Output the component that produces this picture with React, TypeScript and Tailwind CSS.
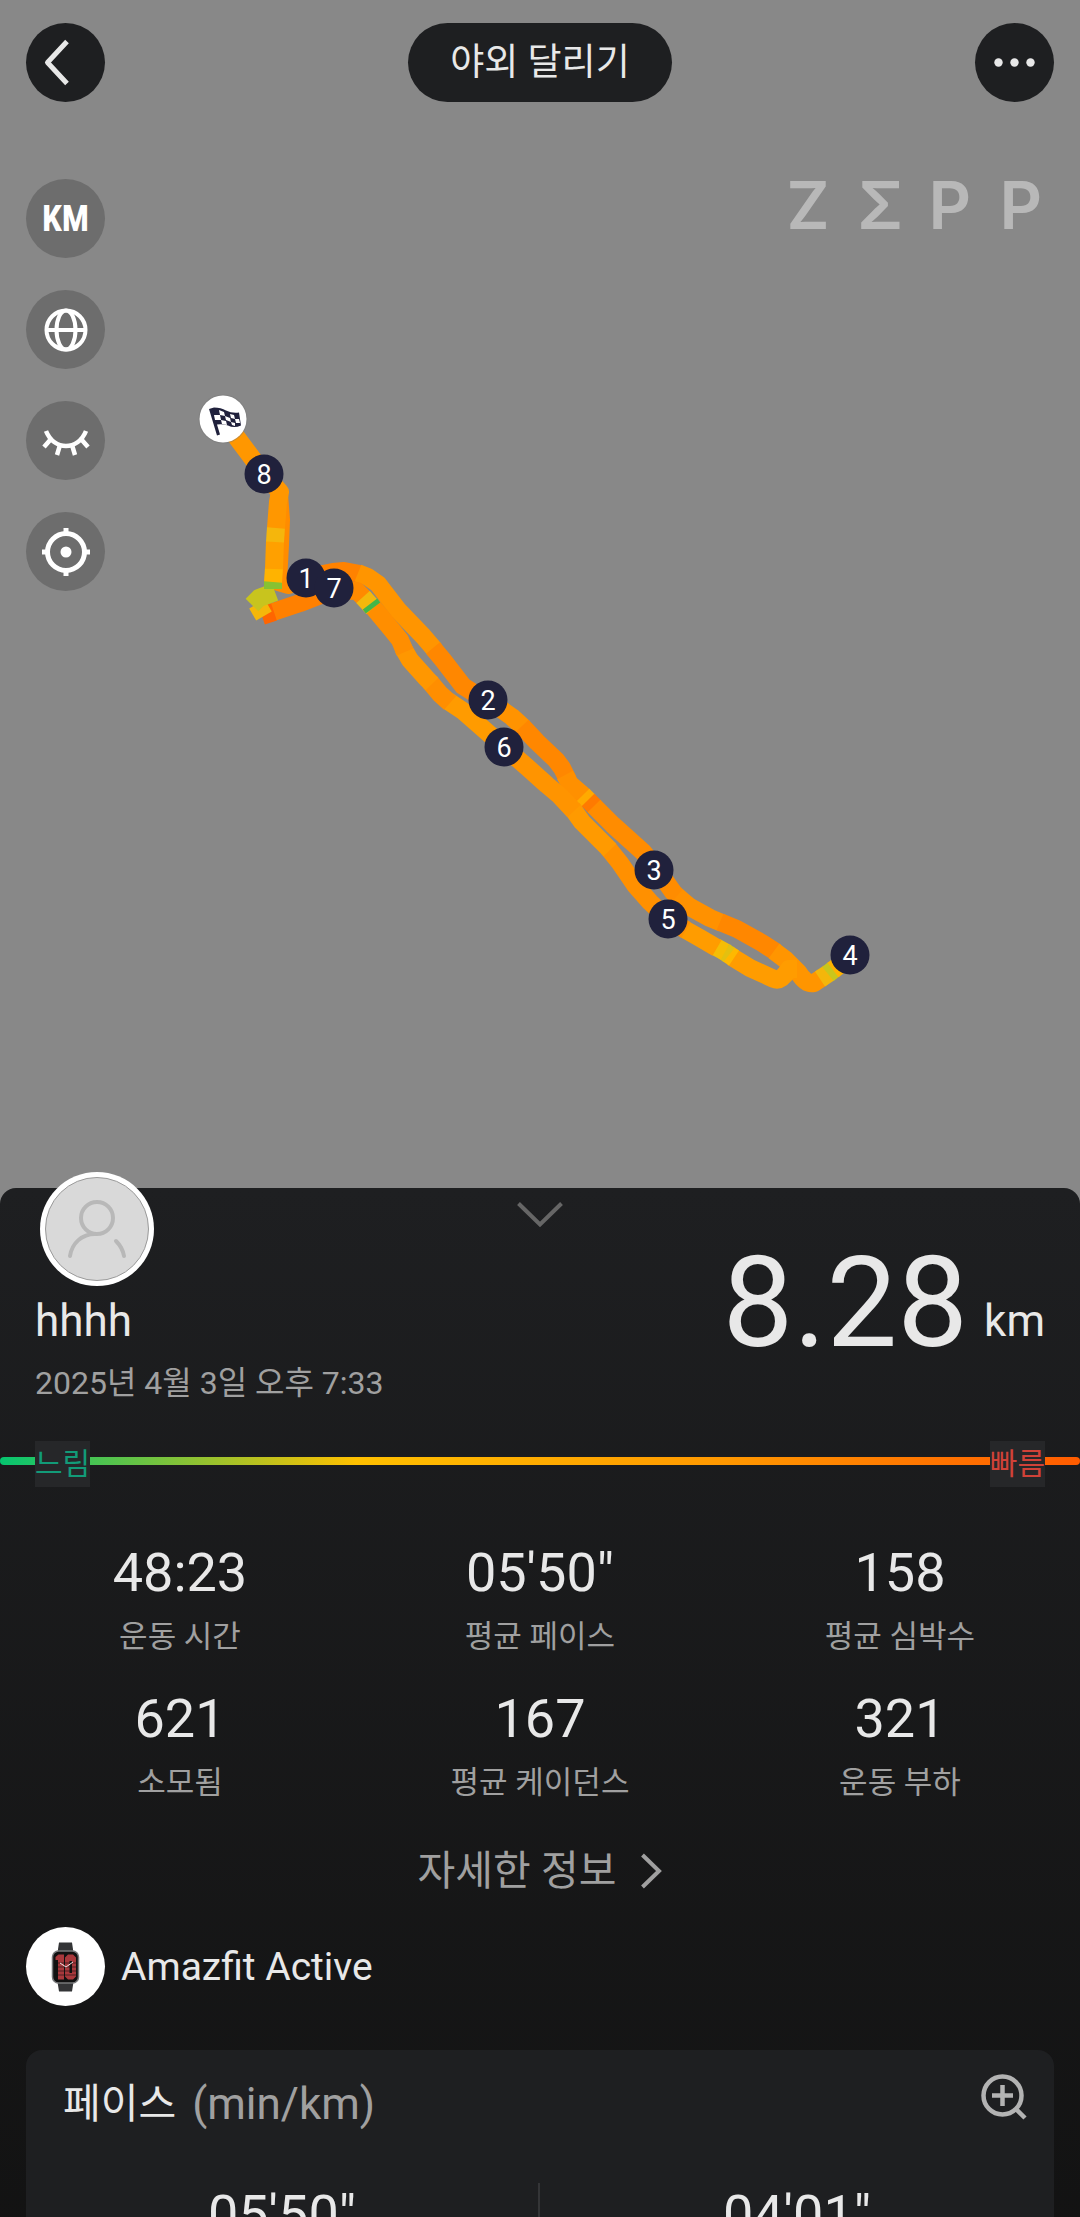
import type { ReactNode } from "react";

const stats = [
  { value: "48:23", label: "운동 시간" },
  { value: "05'50\"", label: "평균 페이스" },
  { value: "158", label: "평균 심박수" },
  { value: "621", label: "소모됨" },
  { value: "167", label: "평균 케이던스" },
  { value: "321", label: "운동 부하" },
];

// drawn in order, later segments cover earlier ones
const segments = [
  // outbound
  { d: "M279 494 L281 520 L280 545 L278 582 L288 585 L306 578 L322 573", color: "#ff8c00" },
  { d: "M318 575 L333 572 L344 571 L360 574", color: "#ff8200" },
  { d: "M358 573 L368 577 L378 584 L398 610 L423 636 L435 650", color: "#ff9500" },
  { d: "M433 648 L443 660 L463 686 L488 702", color: "#ff8700" },
  { d: "M488 700 L512 717 L524 728", color: "#ff9300" },
  { d: "M522 726 L537 742 L556 760 L562 768 L568 780", color: "#ff8700" },
  { d: "M565 775 L570 784 L584 796", color: "#ff9000" },
  { d: "M583 795 L589 801", color: "#ffaa00" },
  { d: "M588 800 L595 807", color: "#ff7a00" },
  { d: "M594 806 L613 825 L643 852 L656 868 L673 892 L679 898", color: "#ff8c00" },
  { d: "M677 896 L690 907 L710 918 L722 923", color: "#ff9100" },
  { d: "M720 922 L737 929 L762 943 L776 952", color: "#ff8700" },
  { d: "M774 951 L786 960 L798 972 Q806 985 814 983 L823 977", color: "#ff9500" },
  { d: "M820 979 L829 973", color: "#f4b60a" },
  { d: "M828 974 L834 969", color: "#c9c61c" },
  { d: "M833 970 L850 957", color: "#ffb300" },
  // return
  { d: "M797 969 L789 969 Q781 982 774 979 L750 968 L732 957", color: "#ff9c00" },
  { d: "M734 958 L728 954", color: "#ffb800" },
  { d: "M729 955 L724 951", color: "#e3c010" },
  { d: "M725 952 L716 947", color: "#f5bd05" },
  { d: "M717 948 L700 938 L684 929", color: "#ff9c00" },
  { d: "M686 930 L668 919 L650 902 L635 885 L620 863 L608 848", color: "#ff9000" },
  { d: "M610 850 L600 840 L582 822 L572 808", color: "#ff9a00" },
  { d: "M574 811 L560 796 L547 785 L527 767 L504 747", color: "#ff9400" },
  { d: "M504 747 L487 732 L463 711 L448 701", color: "#ff9b00" },
  { d: "M450 703 L440 694 L430 682", color: "#ff8e00" },
  { d: "M432 684 L427 679 L410 660 L403 648", color: "#ff9700" },
  { d: "M405 652 L400 640 L392 630 L373 607", color: "#ff8e00" },
  { d: "M366 600 L357 591 L334 590", color: "#ff8a00" },
  { d: "M373 608 L363 597", color: "#f3b80c" },
  { d: "M373 608 L370 604", color: "#43b649" },
  { d: "M336 589 L300 603 L270 613", color: "#ff8000" },
  { d: "M274 612 L262 616", color: "#ff6500" },
  { d: "M264 616 L257 604", color: "#f5b70a" },
  { d: "M252 605 L259 598 L275 592", color: "#c8c41e" },
  { d: "M273 589 L273 581", color: "#86c232" },
  { d: "M273 582 L274 568", color: "#ffb300" },
  { d: "M274 569 L275 541", color: "#ffa000" },
  { d: "M275 542 L276 527", color: "#f5b60c" },
  { d: "M276 528 L278 502 L280 492 L264 474 L223 419", color: "#ff9700" },
];

const kilometers = [
  { n: 8, x: 264, y: 474 },
  { n: 1, x: 306, y: 578 },
  { n: 7, x: 334, y: 588 },
  { n: 2, x: 488, y: 700 },
  { n: 6, x: 504, y: 747 },
  { n: 3, x: 654, y: 870 },
  { n: 5, x: 668, y: 919 },
  { n: 4, x: 850, y: 955 },
];

function RouteMap() {
  return (
    <svg viewBox="0 0 1080 1188" className="col-start-1 row-start-1 w-full" aria-label="route">
      <g fill="none" strokeWidth="18" strokeLinejoin="round">
        {segments.map((s) => (
          <path key={s.d} d={s.d} stroke={s.color} />
        ))}
      </g>
      <circle cx="223" cy="419" r="24.5" fill="#777" opacity="0.4" />
      <circle cx="223" cy="419" r="23.5" fill="#fff" />
      <g fill="#20213c">
        <path d="M209 409 l5 -1.500 q7 0 12 3 q6 3 13 2 l2 13 q-7 3 -13 0 q-6 -2 -11 -1 l3 10 -3 1z" />
        <g fill="#fff">
          <path d="M219 410 l5 2 1 4 -5 -1z" />
          <path d="M230 414 l4 1 1 4 -4 -1z" />
          <path d="M214 415 l6 0 1 5 -6 0z" />
          <path d="M225 416 l5 2 1 4 -5 -2z" />
          <path d="M235 419 l4 0 1 4 -4 0z" />
          <path d="M221 420 l5 1 1 4 -5 -1z" />
          <path d="M231 422 l4 1 0 3 -3 -1z" />
        </g>
      </g>
      {kilometers.map((k) => (
        <g key={k.n}>
          <circle cx={k.x} cy={k.y} r="19.500" fill="#20213c" />
          <text
            x={k.x}
            y={k.y + 10}
            textAnchor="middle"
            className="fill-white font-['Roboto',sans-serif] text-[27px]"
          >
            {k.n}
          </text>
        </g>
      ))}
    </svg>
  );
}

function MapButton({ label, children }: { label: string; children: ReactNode }) {
  return (
    <button
      aria-label={label}
      className="flex size-[79px] items-center justify-center rounded-full bg-[#6d6d6d] text-white"
    >
      {children}
    </button>
  );
}

function MapControls() {
  return (
    <div className="flex flex-col gap-8">
      <MapButton label="KM">
        <span className="font-['Roboto_Condensed','Liberation_Sans_Narrow','Roboto',sans-serif] text-[36px] leading-10 font-bold">
          KM
        </span>
      </MapButton>
      <MapButton label="지도 유형">
        <svg viewBox="0 0 44 44" className="size-11" fill="none" stroke="currentColor" strokeWidth="4">
          <circle cx="22" cy="22" r="19.500" />
          <ellipse cx="22" cy="22" rx="9.500" ry="19.500" />
          <path d="M3 22h38" />
        </svg>
      </MapButton>
      <MapButton label="지도 숨기기">
        <svg viewBox="0 0 48 48" className="size-12" fill="none" stroke="currentColor" strokeWidth="4.500">
          <path d="M4 14C12 34 36 34 44 14" />
          <path d="M9 22l-7 8M39 22l7 8M18 28l-3 10M30 28l3 10" />
        </svg>
      </MapButton>
      <MapButton label="위치">
        <svg viewBox="0 0 48 48" className="size-12" fill="none" stroke="currentColor" strokeWidth="5">
          <circle cx="24" cy="24" r="18.500" />
          <circle cx="24" cy="24" r="5.500" fill="currentColor" stroke="none" />
          <path d="M24 0v6M24 42v6M0 24h6M42 24h6" />
        </svg>
      </MapButton>
    </div>
  );
}

function Logo() {
  return (
    <div className="grid grid-cols-[71px_71px_71px_auto] font-['Inter',sans-serif] text-[66px] leading-[52px] font-semibold text-[#b8b8b8]">
      <span>Z</span>
      <span>Σ</span>
      <span>P</span>
      <span>P</span>
    </div>
  );
}

function TopBar() {
  return (
    <header className="flex items-center justify-between">
      <button aria-label="뒤로" className="size-[79px] rounded-full bg-[#1e1f21] text-[#e8e8e8]">
        <svg viewBox="0 0 79 79" fill="none" stroke="currentColor" strokeWidth="5" strokeLinejoin="round">
          <path d="M41 18.500L21.500 39.500 41 60.500" />
        </svg>
      </button>
      <h1 className="rounded-full bg-[#1e1f21] px-[42px] text-[37px] leading-[79px] text-[#e8e8e8]">
        야외 달리기
      </h1>
      <button aria-label="더보기" className="size-[79px] rounded-full bg-[#1e1f21] text-[#e8e8e8]">
        <svg viewBox="0 0 79 79" fill="currentColor">
          <circle cx="23.500" cy="39.500" r="4.200" />
          <circle cx="39.500" cy="39.500" r="4.200" />
          <circle cx="55.500" cy="39.500" r="4.200" />
        </svg>
      </button>
    </header>
  );
}

function Avatar() {
  return (
    <div className="absolute -top-4 left-10 size-[114px] rounded-full bg-white p-[5px]">
      <svg viewBox="0 0 104 104" fill="none">
        <circle cx="52" cy="52" r="51.500" fill="#d9d9d9" stroke="#9a9a9a" />
        <g stroke="#b8b8b8" strokeWidth="4" strokeLinecap="round">
          <circle cx="52" cy="41" r="16" />
          <path d="M25 79C27 66 37 57 50 57M71 64C75 68 78 73 79 79" />
        </g>
      </svg>
    </div>
  );
}

function WatchIcon() {
  return (
    <svg viewBox="0 0 79 79" className="size-[79px] shrink-0 rounded-full bg-white" fill="none">
      <path d="M33 15.500h13l1.500 10h-16zM31.500 55h16l-1.500 9.500h-13z" fill="#333436" />
      <rect x="26.500" y="24" width="26" height="32" rx="6" fill="#111" stroke="#77787a" strokeWidth="1.500" />
      <path d="M29.500 30l3-2.500h5.500v25h-6V33h-2.500z" fill="#a8383c" />
      <path d="M39 30.500l3-3h5l3 3v19l-3 3h-5l-3-3zM43.500 34v12h2.500V34z" fill="#a8383c" fillRule="evenodd" />
      <path d="M29 36h21M29 40h21M29 44h21M29 48h21" stroke="#111" strokeWidth="0.600" />
      <path d="M34 36l6 4 7-5" stroke="#f0e6e6" />
    </svg>
  );
}

function Summary() {
  return (
    <>
      <div className="flex justify-between px-[35px] pt-[52px]">
        <div className="pt-[55px]">
          <p className="text-[44px] leading-[52px] text-[#e8e8e8]">hhhh</p>
          <p className="mt-4 text-[32px] leading-10 text-[#a0a0a0]">2025년 4월 3일 오후 7:33</p>
        </div>
        <p className="flex items-start gap-4 text-[#e8e8e8]">
          <span className="text-[126px] leading-[126px]">8.28</span>
          <span className="pt-[55px] text-[44px] leading-[52px]">km</span>
        </p>
      </div>
      <div className="relative mt-[38px] flex justify-between px-[35px] text-[30px] leading-[46px]">
        <div className="absolute inset-x-0 top-4 h-2 rounded-full bg-[linear-gradient(90deg,#06c570_0%,#ffc000_33%,#ff9800_67%,#ff5c00_100%)]" />
        <span className="relative bg-[#262729] text-[#129b78]">느림</span>
        <span className="relative bg-[#262729] text-[#d04238]">빠름</span>
      </div>
    </>
  );
}

function PaceCard() {
  return (
    <section className="mx-[26px] mt-11 rounded-2xl bg-[#1e1f21]">
      <div className="flex items-start justify-between pt-6 pr-[27px] pl-[37px]">
        <h2 className="flex gap-4 pt-1 leading-[52px]">
          <span className="text-[41px] text-[#e8e8e8]">페이스</span>
          <span className="text-[44px] text-[#a0a0a0]">(min/km)</span>
        </h2>
        <button aria-label="확대" className="text-[#b3b3b3]">
          <svg viewBox="0 0 46 46" className="size-[46px]" fill="none" stroke="currentColor" strokeWidth="4.500">
            <circle cx="21.500" cy="21.500" r="19" />
            <path d="M11 21.500h21M21.500 11v21M35 35l9 9" />
          </svg>
        </button>
      </div>
      <div className="mt-[53px] grid grid-cols-2 divide-x-2 divide-[#343537] pb-10 text-center text-[54px] leading-[64px] text-[#e8e8e8]">
        <p>05'50"</p>
        <p>04'01"</p>
      </div>
    </section>
  );
}

export default function App() {
  return (
    <div className="h-screen overflow-hidden bg-[#888] font-['Roboto','Noto_Sans_CJK_KR',sans-serif]">
      <section className="grid">
        <RouteMap />
        <div className="relative col-start-1 row-start-1 px-[26px] pt-[23px]">
          <TopBar />
          <div className="mt-[77px] flex items-start justify-between pr-3">
            <MapControls />
            <Logo />
          </div>
        </div>
      </section>

      <main className="relative rounded-t-2xl bg-linear-to-b from-[#1e1f21] to-[#121212]">
        <Avatar />
        <button aria-label="접기" className="absolute top-3 left-1/2 -translate-x-1/2 text-[#666]">
          <svg viewBox="0 0 48 30" className="h-[30px] w-12" fill="none" stroke="currentColor" strokeWidth="4">
            <path d="M2.500 3.500L24 24.500 45.500 3.500" />
          </svg>
        </button>
        <Summary />
        <dl className="mt-[54px] grid grid-cols-3 gap-y-[30px] text-center">
          {stats.map((s) => (
            <div key={s.label} className="flex flex-col-reverse gap-3">
              <dt className="text-[31px] leading-10 text-[#a0a0a0]">{s.label}</dt>
              <dd className="text-[54px] leading-[64px] text-[#e8e8e8]">{s.value}</dd>
            </div>
          ))}
        </dl>
        <a href="#" className="mt-11 flex items-center justify-center gap-6 text-[41px] leading-[48px] text-[#a0a0a0]">
          자세한 정보
          <svg viewBox="0 0 22 36" className="h-9 w-[22px]" fill="none" stroke="currentColor" strokeWidth="4">
            <path d="M2.500 2L19 18 2.500 34" />
          </svg>
        </a>
        <div className="mt-8 flex items-center gap-4 px-[26px]">
          <WatchIcon />
          <span className="text-[39px] leading-[48px] text-[#e8e8e8]">Amazfit Active</span>
        </div>
        <PaceCard />
      </main>
    </div>
  );
}
